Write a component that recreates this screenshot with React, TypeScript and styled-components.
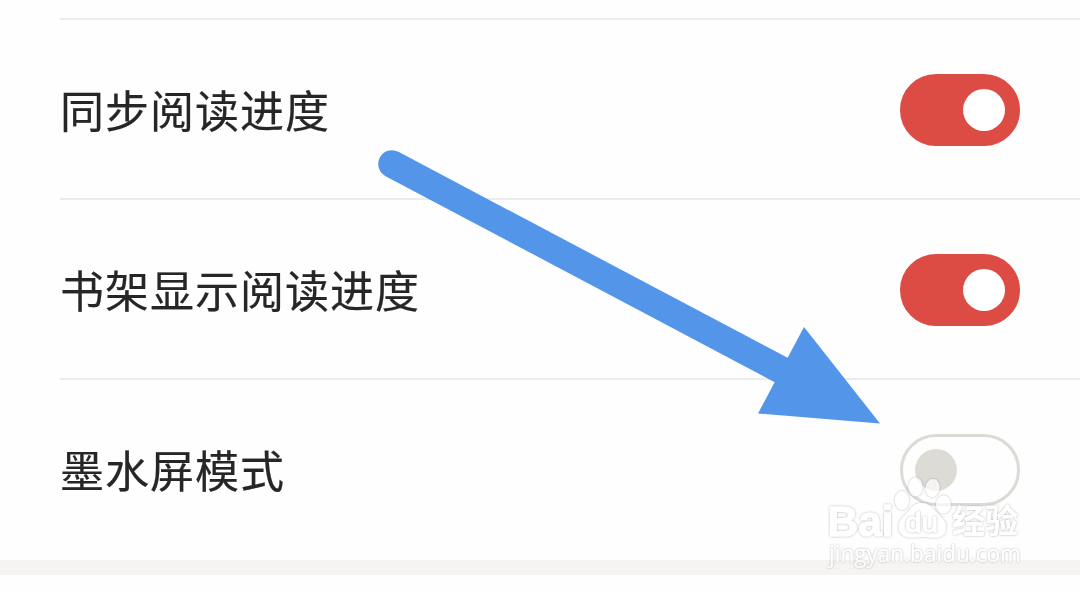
import React, { useState } from 'react';
import styled, { createGlobalStyle } from 'styled-components';

const GlobalStyle = createGlobalStyle`
  body {
    margin: 0;
    background: #fefefe;
    overflow: hidden;
  }
`;

const Page = styled.main`
  position: relative;
  height: 592px;
  display: flex;
  flex-direction: column;
  background: #fefefe;
  font-family: 'Noto Sans CJK SC', sans-serif;
`;

const List = styled.section`
  padding-left: 60px;
`;

const PreviousRow = styled.div`
  height: 20px;
  box-shadow: inset 0 -2px #ebebea;
`;

const Row = styled.div<{ $last?: boolean }>`
  height: 180px;
  box-sizing: border-box;
  padding-right: 60px;
  display: flex;
  align-items: center;
  justify-content: space-between;
  box-shadow: ${({ $last }) => ($last ? 'none' : 'inset 0 -2px #ebebea')};
`;

const Label = styled.span`
  color: #262626;
  font-size: 44px;
  letter-spacing: 1px;
  line-height: 60px;
  padding-bottom: 2px;
  -webkit-text-stroke: 0.2px #262626;
  will-change: transform;
`;

const Switch = styled.button<{ $on: boolean }>`
  width: 120px;
  height: 72px;
  box-sizing: border-box;
  padding: 0 12px;
  display: flex;
  align-items: center;
  justify-content: ${({ $on }) => ($on ? 'flex-end' : 'flex-start')};
  border: 3px solid ${({ $on }) => ($on ? '#dc4c44' : '#dcdbd6')};
  border-radius: 36px;
  background: ${({ $on }) => ($on ? '#dc4c44' : '#fefefe')};
`;

const Knob = styled.span<{ $on: boolean }>`
  width: 42px;
  height: 42px;
  border-radius: 50%;
  background: ${({ $on }) => ($on ? '#fff' : '#dcdbd6')};
`;

const Divider = styled.div`
  height: 15px;
  background: #f5f4f3;
`;

const Overlay = styled.svg`
  position: absolute;
  top: 0;
  left: 0;
  pointer-events: none;
`;

const MarkText = styled.text<{ $size: number; $weight?: number; $open?: boolean }>`
  font-family: ${({ $open }) => ($open ? "'Open Sans'" : "'Liberation Sans'")}, 'Noto Sans CJK SC', sans-serif;
  font-size: ${({ $size }) => $size}px;
  font-weight: ${({ $weight }) => $weight || 700};
`;

const settings = [
  { label: '同步阅读进度', value: true },
  { label: '书架显示阅读进度', value: true },
  { label: '墨水屏模式', value: false },
];

const Arrow: React.FC = () => (
  <Overlay width="1080" height="592">
    <path d="M392 164L785 372" stroke="#5295e9" strokeWidth="27.5" strokeLinecap="round" />
    <path d="M804 327L880 423.500L758 413.500Z" fill="#5295e9" />
  </Overlay>
);

const Watermark: React.FC = () => (
  <Overlay width="1080" height="592">
    <defs>
      {/* white body with a thin soft grey contour */}
      <filter id="edge" x="-5%" y="-10%" width="110%" height="120%">
        <feGaussianBlur in="SourceAlpha" stdDeviation="1" result="soft" />
        <feFlood floodColor="#8c8c8c" floodOpacity="0.7" />
        <feComposite in2="soft" operator="in" result="shade" />
        <feComposite in="shade" in2="SourceAlpha" operator="out" result="rim" />
        <feComponentTransfer in="SourceGraphic" result="body">
          <feFuncA type="linear" slope="0.7" />
        </feComponentTransfer>
        <feMerge>
          <feMergeNode in="rim" />
          <feMergeNode in="body" />
        </feMerge>
      </filter>
    </defs>
    <g filter="url(#edge)" fill="#fff">
      <MarkText $size={43} x="827.5" y="536" textLength="66" lengthAdjust="spacingAndGlyphs" stroke="#fff" strokeWidth="1">Bai</MarkText>
      <ellipse cx="902" cy="500.500" rx="7" ry="9.500" />
      <ellipse cx="915.500" cy="487" rx="7" ry="9.500" />
      <ellipse cx="932.500" cy="488" rx="7" ry="9" transform="rotate(8 932.5 488)" />
      <ellipse cx="943.500" cy="504.500" rx="7.500" ry="9" />
      <path d="M922 503C912 503 911 510 905 515C899 520 897 526 900 532C905 540 914 537 922 537C930 537 940 540 945 533C948 526 945 520 939 515C933 510 932 503 922 503Z" />
      <MarkText $size={33} x="952" y="533" textLength="66" lengthAdjust="spacingAndGlyphs">经验</MarkText>
    </g>
    <g filter="url(#edge)" fill="#fff">
      <MarkText $size={27} $weight={400} x="905" y="532" textLength="33" lengthAdjust="spacingAndGlyphs" stroke="#fff" strokeWidth="0.8">du</MarkText>
    </g>
    <g filter="url(#edge)" fill="#fff">
      <MarkText $open $size={23} $weight={500} x="829" y="562" textLength="192" lengthAdjust="spacingAndGlyphs">jingyan.baidu.com</MarkText>
    </g>
  </Overlay>
);

const App: React.FC = () => {
  const [values, setValues] = useState(settings.map((item) => item.value));

  const toggle = (index: number) => {
    setValues(values.map((value, i) => (i === index ? !value : value)));
  };

  return (
    <>
      <GlobalStyle />
      <Page>
        <List>
          <PreviousRow />
          {settings.map((item, i) => (
            <Row key={item.label} $last={i === settings.length - 1}>
              <Label>{item.label}</Label>
              <Switch
                type="button"
                role="switch"
                aria-label={item.label}
                aria-checked={values[i]}
                $on={values[i]}
                onClick={() => toggle(i)}
              >
                <Knob $on={values[i]} />
              </Switch>
            </Row>
          ))}
        </List>
        <Divider />
        <Arrow />
        <Watermark />
      </Page>
    </>
  );
};

export default App;
